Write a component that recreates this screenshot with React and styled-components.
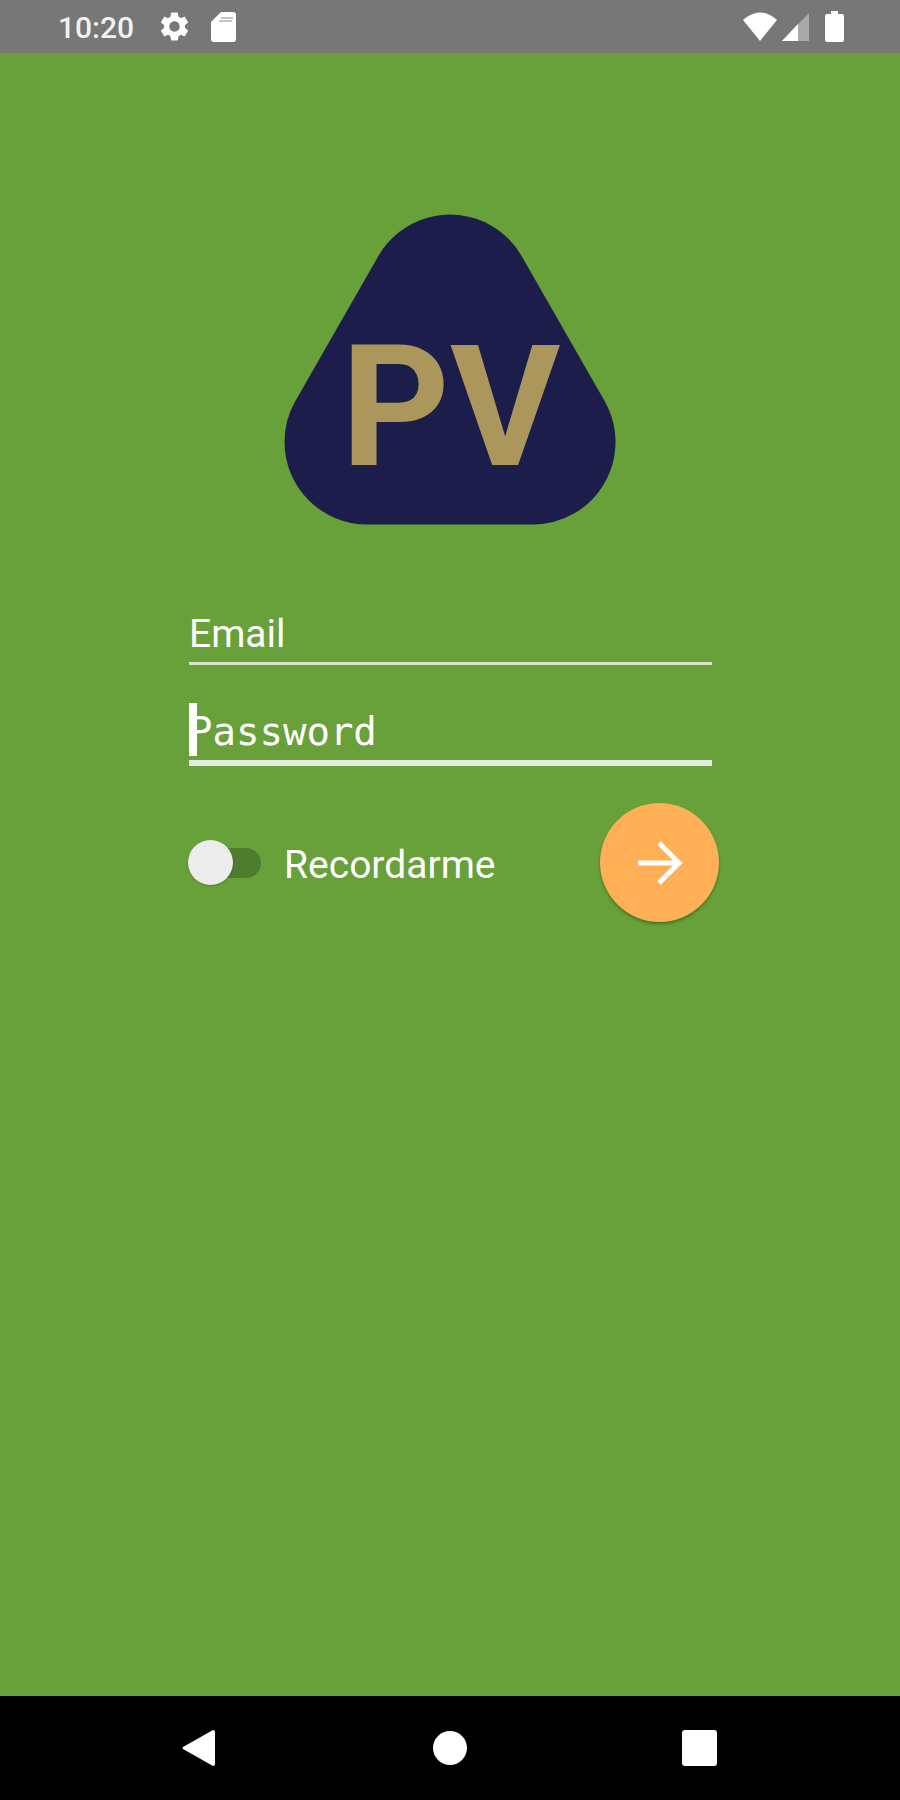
import styled, { createGlobalStyle } from "styled-components";

const GlobalStyle = createGlobalStyle`
    * {
        box-sizing: border-box;
    }

    body {
        margin: 0;
        font-family: Roboto, "Liberation Sans", sans-serif;
    }
`;

const Screen = styled.div`
    display: flex;
    flex-direction: column;
    min-height: 100vh;
    background: #68a039;
    color: #fff;
`;

export default function App() {
    return (
        <Screen>
            <GlobalStyle />
            <StatusBar />
            <Login />
            <NavigationBar />
        </Screen>
    );
}

const StatusContainer = styled.header`
    display: flex;
    align-items: center;
    justify-content: space-between;
    height: 53px;
    padding: 0 56px 0 58px;
    background: #777;
`;

const StatusGroup = styled.div`
    display: flex;
    align-items: center;
    gap: ${(props) => props.$gap}px;
`;

const Time = styled.time`
    padding-top: 2px;
    margin-right: 4px;
    font-size: 30px;
    font-weight: 500;
    line-height: 36px;
    color: #f2f2f2;
`;

const StatusBar = () => (
    <StatusContainer>
        <StatusGroup $gap={22}>
            <Time>10:20</Time>
            <GearIcon />
            <CardIcon />
        </StatusGroup>
        <StatusGroup $gap={16}>
            <StatusGroup $gap={5}>
                <WifiIcon />
                <SignalIcon />
            </StatusGroup>
            <BatteryIcon />
        </StatusGroup>
    </StatusContainer>
);

const GearIcon = () => (
    <svg width="29" height="29" viewBox="2 2 20 20" fill="#fff">
        <path d="M19.14 12.94c.04-.3.06-.61.06-.94 0-.32-.02-.64-.07-.94l2.03-1.58c.18-.14.23-.41.12-.61l-1.92-3.32c-.12-.22-.37-.29-.59-.22l-2.39.96c-.5-.38-1.03-.7-1.62-.94l-.36-2.54c-.04-.24-.24-.41-.48-.41h-3.84c-.24 0-.43.17-.47.41l-.36 2.54c-.59.24-1.13.57-1.62.94l-2.39-.96c-.22-.08-.47 0-.59.22L2.74 8.87c-.12.21-.08.47.12.61l2.03 1.58c-.05.3-.09.63-.09.94s.02.64.07.94l-2.03 1.58c-.18.14-.23.41-.12.61l1.92 3.32c.12.22.37.29.59.22l2.39-.96c.5.38 1.03.7 1.62.94l.36 2.54c.05.24.24.41.48.41h3.84c.24 0 .44-.17.47-.41l.36-2.54c.59-.24 1.13-.56 1.62-.94l2.39.96c.22.08.47 0 .59-.22l1.92-3.32c.12-.22.07-.47-.12-.61l-2.01-1.58zM12 15.6c-1.98 0-3.6-1.62-3.6-3.6s1.62-3.6 3.6-3.6 3.6 1.62 3.6 3.6-1.62 3.6-3.6 3.6z" />
    </svg>
);

const CardIcon = () => (
    <svg width="25" height="30" viewBox="0 0 25 30">
        <path d="M10 0h12q3 0 3 3v24q0 3-3 3H3q-3 0-3-3V10z" fill="#fff" />
        <path d="M10 6h12M8 9h13" stroke="#c4c4c4" strokeWidth="2" />
    </svg>
);

const WifiIcon = () => (
    <svg width="34" height="29" viewBox="0 0 34 29">
        <path d="M0 8Q17-7 34 8L17 29z" fill="#fff" />
    </svg>
);

const SignalIcon = () => (
    <svg width="27" height="28" viewBox="0 0 27 28">
        <path d="M27 0v28H0z" fill="#aaa" />
        <path d="M16 11v17H0z" fill="#fff" />
    </svg>
);

const BatteryIcon = () => (
    <svg width="19" height="31" viewBox="0 0 19 31">
        <path
            d="M6 0h7v3h4q2 0 2 2v24q0 2-2 2H2q-2 0-2-2V5q0-2 2-2h4z"
            fill="#fff"
        />
    </svg>
);

const Main = styled.main`
    flex: 1;
    display: flex;
    flex-direction: column;
    align-items: center;
    padding: 160px 24px 24px;
`;

const Form = styled.form`
    display: flex;
    flex-direction: column;
    width: 100%;
    max-width: 538px;
    margin-top: 86px;
`;

const Field = styled.div`
    position: relative;
    margin: 0 7px 0 8px;

    & + & {
        margin-top: 44px;
    }
`;

const Input = styled.input`
    display: block;
    width: 100%;
    height: ${(props) => (props.$active ? 57 : 54)}px;
    padding: 0 0 6px;
    border: none;
    border-bottom: solid ${(props) => (props.$active ? 6 : 3)}px
        ${(props) => (props.$active ? "#e4ebe1" : "#d5e5c5")};
    border-radius: 0;
    outline: none;
    background: transparent;
    color: #fff;
    font-family: ${(props) =>
        props.$active ? `"DejaVu Sans Mono", monospace` : "inherit"};
    font-size: 39px;
    line-height: 46px;

    &::placeholder {
        color: #fff;
        opacity: 1;
    }
`;

const Caret = styled.span`
    position: absolute;
    left: 0;
    bottom: 10px;
    width: 8px;
    height: 53px;
    background: #fff;
`;

const Actions = styled.div`
    display: flex;
    align-items: center;
    justify-content: space-between;
    margin-top: 37px;
    padding-left: 7px;
`;

const Remember = styled.div`
    display: flex;
    align-items: center;
    gap: 23px;
`;

const RememberLabel = styled.label`
    padding-top: 4px;
    font-size: 39px;
    line-height: 46px;
`;

const Switch = styled.input`
    appearance: none;
    display: flex;
    align-items: center;
    width: 73px;
    height: 30px;
    margin: 0;
    border-radius: 15px;
    background: #4d7c2d;

    &::before {
        content: "";
        flex: none;
        width: 45px;
        height: 45px;
        border-radius: 50%;
        background: #ececec;
        box-shadow: 0 1px 2px rgba(0, 0, 0, 0.2);
    }

    &:checked {
        justify-content: flex-end;
    }
`;

const SubmitButton = styled.button`
    display: flex;
    align-items: center;
    justify-content: center;
    width: 119px;
    height: 119px;
    padding: 0;
    border: none;
    border-radius: 50%;
    background: #ffaf55;
    box-shadow: 0 2px 3px rgba(0, 60, 0, 0.4);
`;

const Login = () => (
    <Main>
        <Logo />
        <Form onSubmit={(e) => e.preventDefault()}>
            <Field>
                <Input type="email" placeholder="Email" aria-label="Email" />
            </Field>
            <Field>
                <Input
                    type="password"
                    placeholder="Password"
                    aria-label="Password"
                    $active
                />
                <Caret />
            </Field>
            <Actions>
                <Remember>
                    <Switch type="checkbox" id="remember" />
                    <RememberLabel htmlFor="remember">Recordarme</RememberLabel>
                </Remember>
                <SubmitButton type="submit" aria-label="Entrar">
                    <ArrowIcon />
                </SubmitButton>
            </Actions>
        </Form>
    </Main>
);

const ArrowIcon = () => (
    <svg
        width="46"
        height="46"
        viewBox="0 0 46 46"
        fill="none"
        stroke="#fff"
        strokeWidth="5"
    >
        <path d="M1 23h41M22 3l20 20-20 20" />
    </svg>
);

const LogoText = styled.text`
    font-size: 169px;
    font-weight: 700;
    fill: #ab975b;
`;

const Logo = () => (
    <svg width="332" height="312" viewBox="0 0 332 312">
        <path
            d="M166 84L249 229H83z"
            fill="#1c1d4a"
            stroke="#1c1d4a"
            strokeWidth="165"
            strokeLinejoin="round"
        />
        <LogoText x="57" y="252">
            PV
        </LogoText>
    </svg>
);

const NavContainer = styled.nav`
    display: flex;
    justify-content: space-around;
    height: 104px;
    padding: 0 75px;
    background: #000;
`;

const NavButton = styled.button`
    display: flex;
    align-items: center;
    justify-content: center;
    width: 104px;
    padding: 0;
    border: none;
    background: transparent;
`;

const NavigationBar = () => (
    <NavContainer>
        <NavButton aria-label="Back">
            <svg width="36" height="36" viewBox="0 0 36 36" fill="#fff">
                <path d="M1 17L31 0q2 0 2 2v32q0 2-2 2L1 19q-1-1 0-2z" />
            </svg>
        </NavButton>
        <NavButton aria-label="Home">
            <svg width="36" height="36" viewBox="0 0 36 36" fill="#fff">
                <circle cx="18" cy="18" r="17" />
            </svg>
        </NavButton>
        <NavButton aria-label="Recents">
            <svg width="36" height="36" viewBox="0 0 36 36" fill="#fff">
                <rect width="35" height="36" rx="3" />
            </svg>
        </NavButton>
    </NavContainer>
);
